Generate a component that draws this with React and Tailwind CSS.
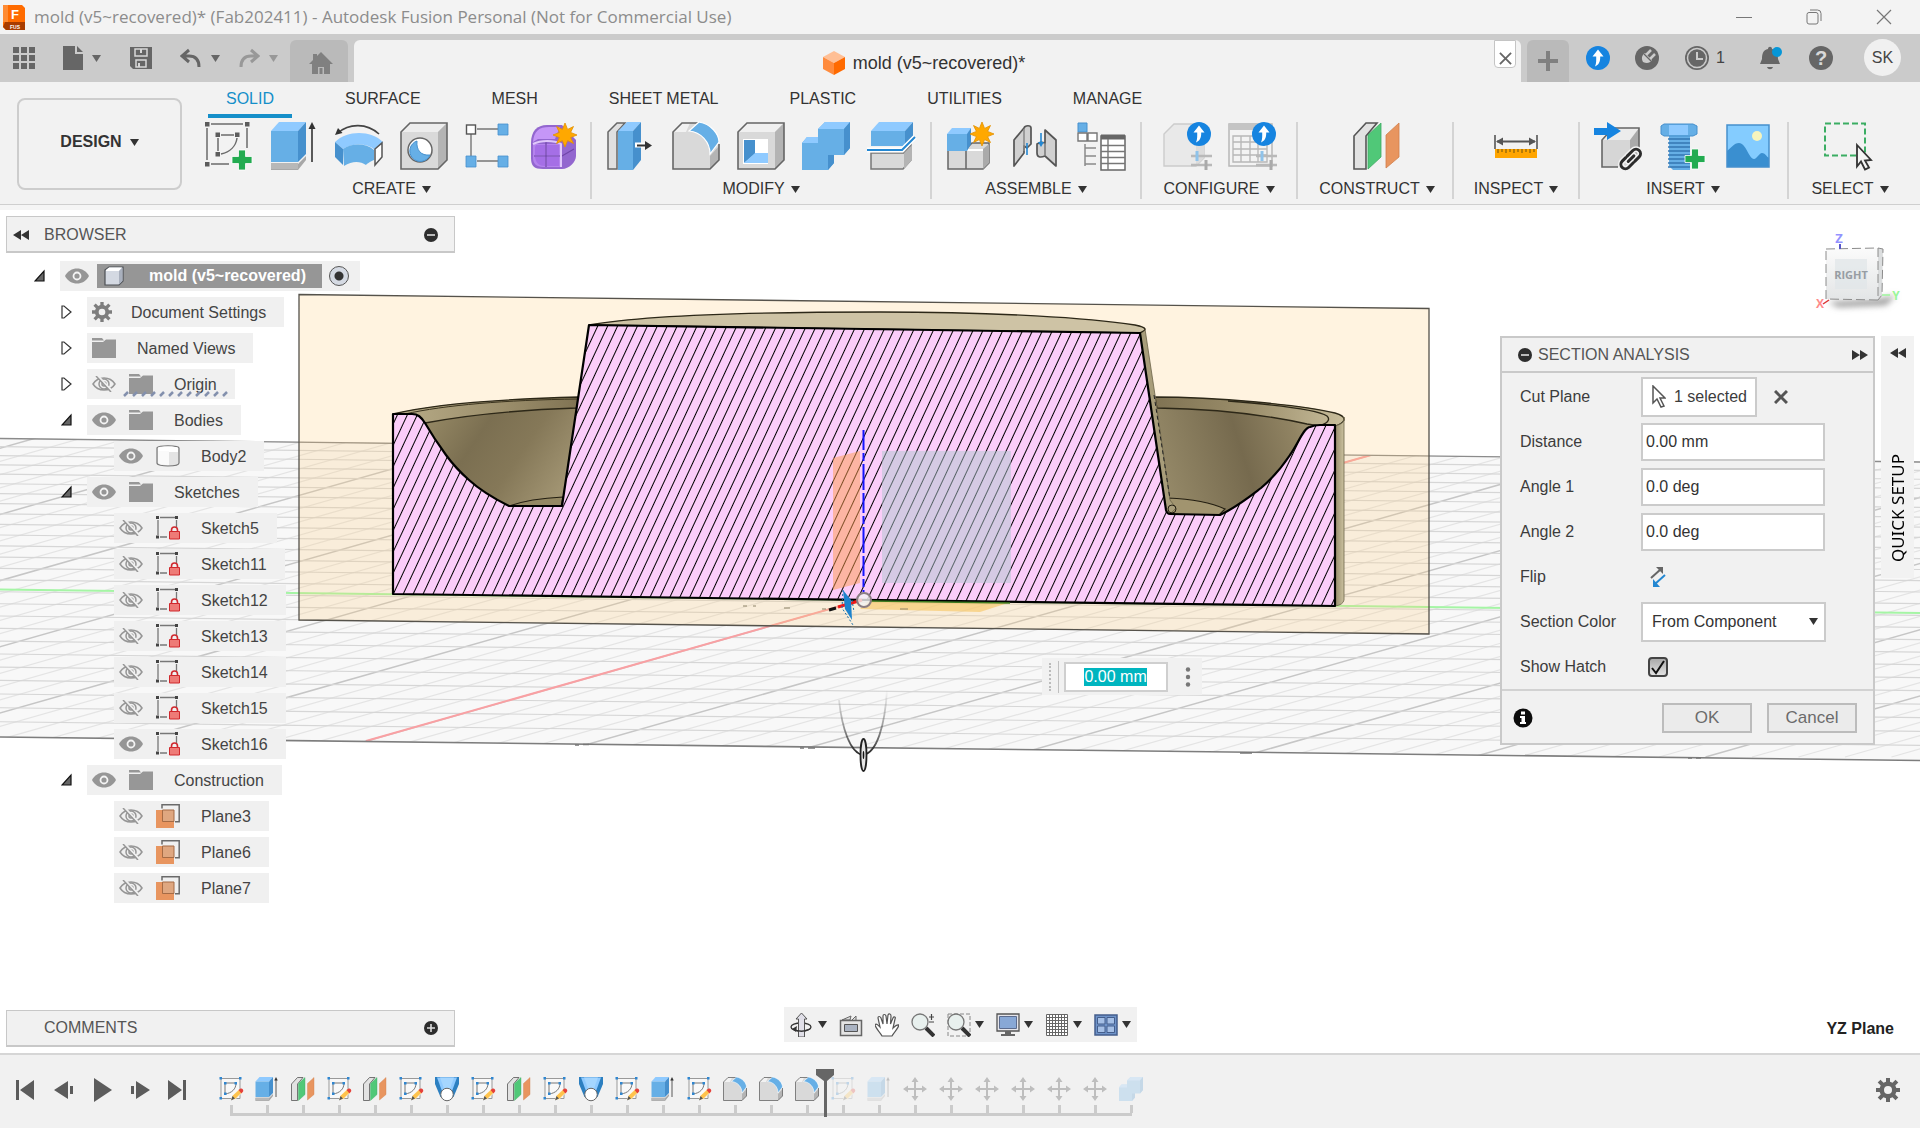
import { useEffect, useRef, useState } from "react";
import clsx from "clsx";

const ribbonTabs = [
  "SOLID",
  "SURFACE",
  "MESH",
  "SHEET METAL",
  "PLASTIC",
  "UTILITIES",
  "MANAGE",
];

const treeItems = [
  { label: "Document Settings", icon: "gear", level: 1, state: "closed" },
  { label: "Named Views", icon: "folder", level: 1, state: "closed" },
  { label: "Origin", icon: "folder", level: 1, state: "closed", eye: "off", dashed: true },
  { label: "Bodies", icon: "folder", level: 1, state: "open", eye: "on" },
  { label: "Body2", icon: "body", level: 2, eye: "on" },
  { label: "Sketches", icon: "folder", level: 1, state: "open", eye: "on" },
  { label: "Sketch5", icon: "sketch", level: 2, eye: "off" },
  { label: "Sketch11", icon: "sketch", level: 2, eye: "off" },
  { label: "Sketch12", icon: "sketch", level: 2, eye: "off" },
  { label: "Sketch13", icon: "sketch", level: 2, eye: "off" },
  { label: "Sketch14", icon: "sketch", level: 2, eye: "off" },
  { label: "Sketch15", icon: "sketch", level: 2, eye: "off" },
  { label: "Sketch16", icon: "sketch", level: 2, eye: "on" },
  { label: "Construction", icon: "folder", level: 1, state: "open", eye: "on" },
  { label: "Plane3", icon: "plane", level: 2, eye: "off" },
  { label: "Plane6", icon: "plane", level: 2, eye: "off" },
  { label: "Plane7", icon: "plane", level: 2, eye: "off" },
];

/* ---------- small shared glyphs ---------- */

function Caret({ className = "text-[#333]" }) {
  return (
    <svg viewBox="0 0 9 7" className={clsx("h-[7px] w-[9px] flex-none", className)} aria-hidden="true">
      <path d="M0 0h9L4.5 7z" fill="currentColor" />
    </svg>
  );
}

function Star({ x, y }) {
  return (
    <path
      transform={`translate(${x} ${y})`}
      d="M0-12 2.6-5.6 8.5-8.5 5.6-2.6 12 0 5.6 2.6 8.5 8.5 2.6 5.6 0 12-2.6 5.6-8.5 8.5-5.6 2.6-12 0-5.6-2.6-8.5-8.5-2.6-5.6z"
      fill="#ffa800"
      stroke="#e29000"
      strokeWidth="0.8"
    />
  );
}

function PlusMark({ x, y }) {
  return (
    <path
      transform={`translate(${x} ${y})`}
      d="M-3.5-10h7v6.5h6.5v7H3.5V10h-7V3.5H-10v-7h6.5z"
      fill="#22ab50"
      stroke="#fff"
      strokeWidth="0.8"
    />
  );
}

function UpBadge({ x, y }) {
  return (
    <g transform={`translate(${x} ${y})`}>
      <circle r="12" fill="#1684e0" />
      <path d="M0-8.5 5.5-1.5H2.2C2.4 4 .5 7-3 8.5-1.5 5-1.8 2-1.8-1.5h-3.7z" fill="#fff" />
    </g>
  );
}

/* ---------- toolbar drawings, all on a 48 x 48 box ---------- */

const drawings = {
  sketch: (
    <>
      <path d="M6 2h32M2 6v32M42 6v20M6 42h18" stroke="#6b6b6b" strokeWidth="1.5" fill="none" />
      <path d="M0 0h4.5v4.5H0zM40 0h4.5v4.5H40zM0 40h4.5v4.5H0zM10.5 10.5H15V15h-4.5zM30 10.5h4.5V15H30zM10.5 30H15v4.5h-4.5z" fill="#5c5c5c" />
      <path d="M16 13h13M13 16v13M32 16c-1 8-7 14-16 16" stroke="#6b6b6b" strokeWidth="1.5" fill="none" />
      <PlusMark x={37} y={38} />
    </>
  ),
  extrude: (
    <>
      <path d="M1 42h27l8-8v4l-8 10H1z" fill="#a8a8a8" />
      <path d="M1 41h27v6H1z" fill="#b8b8b8" />
      <path d="M1 9 9 0h27l-8 9z" fill="#8fcaff" />
      <path d="M1 9h27v31H1z" fill="#66afe6" />
      <path d="m28 9 8-9v32l-8 8z" fill="#4690cd" />
      <path d="M42 40V4" stroke="#333" strokeWidth="1.6" />
      <path d="m38.5 7 3.5-7 3.5 7z" fill="#333" />
    </>
  ),
  revolve: (
    <>
      <path d="M3 11C14 1 32 1 44 12" stroke="#444" strokeWidth="1.6" fill="none" />
      <path d="m0 13 3-7 4.5 5z" fill="#333" />
      <path d="M0 20C12 8 36 8 48 20l-8 8C32 21 18 21 8 27z" fill="#8fcaff" />
      <path d="M0 20 8 27v16L0 35z" fill="#4690cd" />
      <path d="M8 27c9-6 23-6 31 1v10c-5 2-7 4-8 5-6-4-14-4-22 1z" fill="#66afe6" />
      <path d="m40 27 7-6v14l-7 8z" fill="#fff" stroke="#555" strokeWidth="1.5" />
    </>
  ),
  hole: (
    <>
      <path d="M1 10 10 1h37v37l-9 9H1z" fill="#d9d9d9" />
      <path d="M1 10 10 1h37l-9 9z" fill="#ededed" />
      <path d="m38 10 9-9v37l-9 9z" fill="#b4b4b4" />
      <path d="M1 10 10 1h37v37l-9 9H1z" fill="none" stroke="#666" strokeWidth="1.6" />
      <circle cx="20" cy="28" r="12" fill="#fff" stroke="#666" strokeWidth="1.5" />
      <path d="M17 19c-1 9 4 15 13 14A10.500 10.500 0 1 1 17 19z" fill="#66afe6" stroke="#4690cd" />
    </>
  ),
  pattern: (
    <>
      <path d="M12 7h21M6 12v22M12 39h21" stroke="#777" strokeWidth="1.4" />
      <rect x="1.5" y="3" width="9" height="9" fill="#fff" stroke="#555" strokeWidth="1.4" />
      <path d="M33 2h10v11H33zM1 34h10v11H1zM33 34h10v11H33z" fill="#66afe6" stroke="#4690cd" strokeWidth="0.8" />
    </>
  ),
  form: (
    <>
      <path d="M1 21C1 9 7 3 17 3h15l14 15v16c0 6-7 13-14 13H13C4 47 1 44 1 36z" fill="#9367cf" />
      <path d="M3 20C4 9 9 5 19 5h11l-5 12H8z" fill="#c596f7" />
      <path d="M3 22h28v23H13C6 45 3 41 3 36z" fill="#b583ee" />
      <path d="M6 23h9v10H5v-8zM17 23h12v10H17zM5 35h10v9c-6 0-9-3-10-9zM17 35h12v9H17z" fill="#a56fe6" />
      <path d="M4 34h28l12-7M16 20v25" stroke="#6f45a8" strokeWidth="1.2" fill="none" />
      <path d="M3 22c8-4 21-4 28 0v23" stroke="#e0c8fb" strokeWidth="2" fill="none" />
      <Star x={35} y={13} />
    </>
  ),
  pressPull: (
    <>
      <path d="m1 10 9-9h8L10 10v37H1z" fill="#e0e0e0" stroke="#666" strokeWidth="1.5" />
      <path d="m11 9 9-9h14l-8 9z" fill="#8fcaff" />
      <path d="M11 9h15v39H11z" fill="#66afe6" />
      <path d="m26 9 8-9v38l-8 10z" fill="#4690cd" />
      <path d="M28 23h12" stroke="#fff" strokeWidth="5" />
      <path d="M30 23.5h11" stroke="#333" strokeWidth="2" />
      <path d="m38 19 7 4.5-7 4.5z" fill="#333" />
    </>
  ),
  fillet: (
    <>
      <path d="M1 10 10 1h14c12 1 22 11 23 23v14l-9 9H1z" fill="#d9d9d9" />
      <path d="m38 34 9-10v14l-9 9z" fill="#b4b4b4" />
      <path d="M1 10 10 1h8l-4 9z" fill="#f2f2f2" />
      <path d="M26 1H10l-9 9v37h37l9-9V22" fill="none" stroke="#666" strokeWidth="1.6" />
      <path d="m17 9 10-9c12 2 20 12 20 20l-9 12C38 20 29 10 17 9z" fill="#66afe6" stroke="#fff" strokeWidth="1.2" />
    </>
  ),
  shell: (
    <>
      <path d="M1 10 10 1h37v37l-9 9H1z" fill="#d9d9d9" />
      <path d="M1 10 10 1h37l-9 9z" fill="#f0f0f0" />
      <path d="m38 10 9-9v37l-9 9z" fill="#b4b4b4" />
      <path d="M1 10 10 1h37v37l-9 9H1z" fill="none" stroke="#666" strokeWidth="1.6" />
      <path d="M6 17h25v25H6z" fill="#fff" />
      <path d="M7 18h11v14L7 41z" fill="#4690cd" />
      <path d="M7 41 18 31h13v10z" fill="#8fcaff" />
    </>
  ),
  combine: (
    <>
      <path d="m0 21 5-6h11V7l7-7h25v26l-6 7H32v8l-6 7H0z" fill="#66afe6" />
      <path d="m16 7 7-7h25l-6 7zM0 21l5-6h11v6z" fill="#8fcaff" />
      <path d="m42 7 6-7v26l-6 7zM26 33h6v8l-6 7z" fill="#4690cd" />
    </>
  ),
  split: (
    <>
      <path d="M4 31h33l7-8v15l-8 9H4z" fill="#d9d9d9" stroke="#777" strokeWidth="1.5" />
      <path d="m37 31 8-8v15l-8 9z" fill="#b4b4b4" />
      <path d="m4 9 8-9h34l-8 9z" fill="#8fcaff" />
      <path d="M4 9h34v15H4z" fill="#66afe6" />
      <path d="m38 9 8-9v14l-8 10z" fill="#4690cd" />
      <path d="M0 28h35l13-13" stroke="#fff" strokeWidth="5" fill="none" />
      <path d="M0 28h35l13-13" stroke="#2387d2" strokeWidth="2" fill="none" />
    </>
  ),
  newComponent: (
    <>
      <path d="M1 27h18v20H1zM19 27l6-6h17v20l-6 6H19z" fill="#d9d9d9" stroke="#666" strokeWidth="1.5" />
      <path d="M36 27 42 22v19l-6 6z" fill="#aaa" />
      <path d="M19 28h17" stroke="#fff" strokeWidth="2" />
      <path d="m0 12 5-6h19l-3 6z" fill="#8fcaff" />
      <path d="M0 12h20v17H0z" fill="#66afe6" />
      <path d="m20 12 4-6v16l-4 7z" fill="#4690cd" />
      <Star x={35} y={12} />
    </>
  ),
  joint: (
    <>
      <path d="M2 18 12 6c1-3 7-3 7 0v16l-4 4-3-2v7L2 44z" fill="#d0d0d0" stroke="#555" strokeWidth="1.7" strokeLinejoin="round" />
      <path d="M12 7v22" stroke="#888" strokeWidth="1.5" />
      <path d="M44 44 33 34c-5 2-8 1-8-3V22l4-2 4 1V8l11 10z" fill="#d0d0d0" stroke="#555" strokeWidth="1.7" strokeLinejoin="round" />
      <path d="M33 21v13" stroke="#777" strokeWidth="1.5" />
      <path d="M15 21v12M29 11v11" stroke="#2387d2" strokeWidth="1.6" />
      <path d="m26 20 3 5 3-5z" fill="#2387d2" />
    </>
  ),
  bom: (
    <>
      <path d="M1 1h9v9H1z" fill="#66afe6" stroke="#4690cd" />
      <path d="M1 11h9v8H1zM11 11h9v8h-9z" fill="#fff" stroke="#777" strokeWidth="1.4" />
      <path d="M8 22v22M8 26h11M8 34h11M8 42h11" stroke="#8a8a8a" strokeWidth="1.5" />
      <path d="M24 14h24v34H24z" fill="#fff" stroke="#666" strokeWidth="1.5" />
      <path d="M24 12.5h24v5H24z" fill="#666" />
      <path d="M24 23.5h24M24 29.5h24M24 35.5h24M24 41.5h24M31 17v31" stroke="#777" strokeWidth="1.4" />
    </>
  ),
  configure: (
    <>
      <path d="M1 12 11 2h30v34l-8 8H1z" fill="#e9e9e9" stroke="#ccc" strokeWidth="1.4" />
      <path d="m33 11 8-9v34l-8 8z" fill="#dcdcdc" />
      <path d="M28 34h21M28 43h21" stroke="#b9b9b9" strokeWidth="2.5" />
      <path d="M34 29v10" stroke="#8fc3ea" strokeWidth="3" />
      <path d="M43 38v10" stroke="#aaa" strokeWidth="3" />
      <UpBadge x={36} y={12} />
    </>
  ),
  configureTable: (
    <>
      <path d="M1 2h43v42H1z" fill="#f3f3f3" stroke="#b8b8b8" strokeWidth="1.5" />
      <path d="M1 1h43v7H1z" fill="#c4c4c4" />
      <path d="M5 14h34v26H5zM5 20h34M5 27h34M5 33h34M13 14v26M22 14v26M30 14v26" fill="none" stroke="#b8b8b8" strokeWidth="1.4" />
      <path d="M28 34h21M28 43h21" stroke="#b9b9b9" strokeWidth="2.5" />
      <path d="M34 29v10" stroke="#8fc3ea" strokeWidth="3" />
      <path d="M43 38v10" stroke="#aaa" strokeWidth="3" />
      <UpBadge x={36} y={12} />
    </>
  ),
  plane: (
    <>
      <path d="m1 14 12-13h11L13 14v33H1z" fill="#e2e2e2" stroke="#555" strokeWidth="1.6" />
      <path d="M15 13 28 1v34L15 47z" fill="#50c878" stroke="#3daa62" strokeWidth="0.8" />
      <path d="M33 13 46 1v34L33 46z" fill="#e8955f" stroke="#d07f4b" strokeWidth="0.8" />
    </>
  ),
  measure: (
    <>
      <path d="M3 13v14M45 13v14" stroke="#555" strokeWidth="1.6" />
      <path d="M5 19.5h38" stroke="#555" strokeWidth="2" />
      <path d="m4 19.5 7-4v8zM44 19.5l-7-4v8z" fill="#555" />
      <path d="M3 27h42v9H3z" fill="#ffa500" />
      <path d="M6 27v4M10 27v3M14 27v4M18 27v3M22 27v4M26 27v3M30 27v4M34 27v3M38 27v4M42 27v3" stroke="#85600c" strokeWidth="1.2" />
    </>
  ),
  insertLink: (
    <>
      <path d="m8 18 11-12h26l-9 12z" fill="#ececec" />
      <path d="M8 18h28v27H8z" fill="#d6d6d6" />
      <path d="m36 18 9-12v28l-9 11z" fill="#aaa" />
      <path d="M24 45H8V18L19 6h26v20" fill="none" stroke="#666" strokeWidth="1.6" />
      <path d="M0 6h13V0l14 9-14 9v-5H0z" fill="#1684e0" />
      <g fill="none" strokeLinecap="round" transform="rotate(-45 36 37)">
        <path d="M34 33h-5a4 4 0 0 0 0 9h7M38 42h6a4 4 0 0 0 0-9h-8M33 37.5h8" stroke="#f2f2f2" strokeWidth="6" />
        <path d="M34 33h-5a4 4 0 0 0 0 9h7M38 42h6a4 4 0 0 0 0-9h-8M33 37.5h8" stroke="#2b2b2b" strokeWidth="3" />
      </g>
    </>
  ),
  bolt: (
    <>
      <path d="M10 13h21v35H14l-4-4z" fill="#66afe6" />
      <path d="M9 17h22M9 21h22M9 25h22M9 29h22M9 33h22M9 37h22M9 41h22M9 45h22" stroke="#3577b2" strokeWidth="1.5" />
      <path d="M2 4 5 2h29l4 2v8l-4 2H5l-3-2z" fill="#66afe6" stroke="#4690cd" />
      <path d="M10 3h19v10H10z" fill="#8fcaff" />
      <PlusMark x={36} y={37} />
    </>
  ),
  picture: (
    <>
      <path d="M3 3h42v42H3z" fill="#84ccff" />
      <circle cx="33" cy="14" r="5" fill="#f6f4bd" />
      <path d="M3 29c4-3 7-8 12-8 7 0 10 16 15 16 3 0 5-6 8-6s4 3 7 5v9H3z" fill="#3a8fd0" />
      <path d="M3 3h42v42H3z" fill="none" stroke="#4690cd" strokeWidth="1.5" />
    </>
  ),
  select: (
    <>
      <path d="M-1 1.5h40v32H-1z" fill="none" stroke="#3bad63" strokeWidth="2" strokeDasharray="6 3" />
      <path d="m31 23 14 15-6 .5 4 7-4 2-4-8-4 5z" fill="#f5f5f5" stroke="#333" strokeWidth="1.8" />
    </>
  ),
  timelineSketch: (
    <>
      <path d="M4 3h38v40H4z" fill="#f8f8f8" stroke="#999" strokeWidth="2" />
      <path d="M12 12h22M12 12v22M34 12c0 12-8 20-22 22" stroke="#777" strokeWidth="2" fill="none" />
      <path d="M1 0h5v5H1zM40 0h5v5h-5zM1 40h5v5H1zM10 10h5v5h-5zM31 10h5v5h-5zM10 31h5v5h-5z" fill="#2f86d0" />
      <path d="m24 46 3-9 14-13 6 6-14 14z" fill="#ffc34d" stroke="#fff" strokeWidth="1" />
      <path d="m24 47 3-9 5 5z" fill="#555" />
      <path d="m39 26 4-3c3-1 7 3 5 6l-3 4z" fill="#e5413b" />
    </>
  ),
  loft: (
    <>
      <path d="M0 0h48v14L37 40H11L0 14z" fill="#2c7fc0" />
      <path d="M4 1h40L34 28H14z" fill="#8fcaff" />
      <path d="M10 1h28l-8 22H18z" fill="#a5d6ff" />
      <circle cx="24" cy="35" r="12.500" fill="#fff" stroke="#666" strokeWidth="2" />
    </>
  ),
  move: (
    <>
      <path d="M24 6v36M6 24h36" stroke="#8c8c8c" strokeWidth="4" />
      <path d="m24 0 7 10H17zM24 48l-7-10h14zM0 24l10-7v14zM48 24l-10 7V17z" fill="#8c8c8c" />
    </>
  ),
};

function Drawing({ name, className = "h-12 w-12" }) {
  return (
    <svg viewBox="0 0 48 48" className={clsx("flex-none overflow-visible", className)} aria-hidden="true">
      {drawings[name]}
    </svg>
  );
}

/* ---------- title bar and document tabs ---------- */

function TitleBar() {
  return (
    <header className="flex h-[34px] items-center bg-[#f3f3f3] pl-[3px] pr-7">
      <svg viewBox="0 0 22 25" className="h-[25px] w-[22px]" aria-hidden="true">
        <path d="M3 0h16l3 3v22H3l-3-3V0z" fill="#ff6b00" />
        <path d="M0 0h5v17H0z" fill="#ff8b33" />
        <path d="M2 17h20v8H3l-3-3z" fill="#a83c00" />
        <text x="12" y="14" fontSize="13" fontWeight="700" fill="#fff" textAnchor="middle" fontFamily="Liberation Sans, sans-serif">F</text>
        <text x="12" y="23.5" fontSize="5" fontWeight="700" fill="#fff" textAnchor="middle" fontFamily="Liberation Sans, sans-serif">FUS</text>
      </svg>
      <h1 className="ml-[9px] flex-1 truncate font-['Open_Sans',sans-serif] text-[17px] leading-6 text-[#8c8c8c]">
        mold (v5~recovered)* (Fab202411) - Autodesk Fusion Personal (Not for Commercial Use)
      </h1>
      <div className="flex gap-[54px] text-[#777]">
        <button type="button" aria-label="Minimize">
          <svg viewBox="0 0 16 16" className="h-4 w-4" fill="none" stroke="currentColor"><path d="M0 8.5h16" /></svg>
        </button>
        <button type="button" aria-label="Restore">
          <svg viewBox="0 0 16 16" className="h-4 w-4" fill="none" stroke="currentColor">
            <rect x="1" y="3.5" width="11" height="11.5" rx="2" />
            <path d="M4 1h7.500a3.500 3.500 0 0 1 3.500 3.500V12" />
          </svg>
        </button>
        <button type="button" aria-label="Close window">
          <svg viewBox="0 0 16 16" className="h-4 w-4" fill="none" stroke="currentColor" strokeWidth="1.2"><path d="m1 1 14 14M15 1 1 15" /></svg>
        </button>
      </div>
    </header>
  );
}

function DocumentBar() {
  return (
    <div className="flex h-12 bg-[#cbcbcb] pt-[6px] text-[#666]">
      <div className="flex w-[290px] flex-none items-center pb-[6px] pl-[13px]">
        <button type="button" aria-label="Show data panel">
          <svg viewBox="0 0 22 22" className="h-[22px] w-[22px]" fill="currentColor">
            <path d="M0 0h6v6H0zM8 0h6v6H8zM16 0h6v6h-6zM0 8h6v6H0zM8 8h6v6H8zM16 8h6v6h-6zM0 16h6v6H0zM8 16h6v6H8zM16 16h6v6h-6z" />
          </svg>
        </button>
        <button type="button" aria-label="File" className="ml-7 flex items-center gap-[9px]">
          <svg viewBox="0 0 20 24" className="h-6 w-5" fill="currentColor"><path d="M0 0h12v8h8v16H0zM14 0l6 6h-6z" /></svg>
          <Caret className="text-[#666]" />
        </button>
        <button type="button" aria-label="Save" className="ml-[29px]">
          <svg viewBox="0 0 22 22" className="h-[22px] w-[22px]">
            <path d="M0 0h22v22H3l-3-3z" fill="#666" />
            <path d="M5 2h12v7H5zM6 13h10v7H6z" fill="none" stroke="#d8d8d8" strokeWidth="1.5" />
            <path d="M11 2v4M9 16v4" stroke="#d8d8d8" strokeWidth="2" />
          </svg>
        </button>
        <button type="button" aria-label="Undo" className="ml-7 flex items-center gap-[9px]">
          <svg viewBox="0 0 22 20" className="h-5 w-[22px]" fill="none" stroke="currentColor" strokeWidth="3">
            <path d="m9 2-7 6 7 6M2 8h7c7 0 10 4 10 11" />
          </svg>
          <Caret className="text-[#666]" />
        </button>
        <button type="button" aria-label="Redo" className="ml-[18px] flex items-center gap-[9px] text-[#989898]">
          <svg viewBox="0 0 22 20" className="h-5 w-[22px]" fill="none" stroke="currentColor" strokeWidth="3">
            <path d="m13 2 7 6-7 6M20 8h-7C6 8 3 12 3 19" />
          </svg>
          <Caret className="text-[#989898]" />
        </button>
      </div>
      <button type="button" aria-label="Home" className="flex w-[58px] flex-none items-center justify-center rounded-t-md bg-[#bababa] pl-1 pt-1">
        <svg viewBox="0 0 24 22" className="h-[22px] w-6" fill="#808080">
          <path d="M12 0 24 12h-3v10h-6v-7H9v7H3V12H0L4 8V2h4v2z" />
          <path d="M10.5 16h3v6h-3z" />
        </svg>
      </button>
      <div className="ml-[6px] flex flex-1 rounded-t-md bg-[#f2f2f2]">
        <div className="flex flex-1 items-center justify-center gap-2 pt-1 text-[18px] text-[#333]">
          <svg viewBox="0 0 22 24" className="h-6 w-[22px]" aria-hidden="true">
            <path d="m0 6 11-6 11 6-11 6z" fill="#ffbf95" />
            <path d="M0 6l11 6v12L0 18z" fill="#ff8b3d" />
            <path d="m22 6-11 6v12l11-6z" fill="#ff6a00" />
          </svg>
          mold (v5~recovered)*
        </div>
        <button type="button" aria-label="Close document" className="mr-[5px] flex h-7 w-[22px] items-end justify-center rounded-b-sm border border-[#c4c4c4] bg-white pb-[2px]">
          <svg viewBox="0 0 14 14" className="h-[13px] w-[13px]" fill="none" stroke="#666" strokeWidth="2"><path d="m1 1 12 12M13 1 1 13" /></svg>
        </button>
      </div>
      <button type="button" aria-label="New design" className="ml-[6px] flex w-[42px] flex-none items-center justify-center rounded-t-md bg-[#bababa]">
        <svg viewBox="0 0 20 20" className="h-5 w-5" fill="#808080"><path d="M8 0h4v8h8v4h-8v8H8v-8H0V8h8z" /></svg>
      </button>
      <div className="flex flex-none items-center pb-[7px] pl-[17px] pr-[19px]">
        <button type="button" aria-label="Extensions">
          <svg viewBox="0 0 24 24" className="h-6 w-6"><UpBadge x={12} y={12} /></svg>
        </button>
        <button type="button" aria-label="Job status" className="ml-[25px]">
          <svg viewBox="0 0 24 24" className="h-6 w-6">
            <circle cx="12" cy="12" r="12" fill="#666" />
            <path d="m4 20 4-4c-2-4-1-7 2-9l7 7c-2 3-5 4-9 2" fill="#cbcbcb" />
            <path d="m11 9 5-5M15 13l5-5" stroke="#cbcbcb" strokeWidth="2.5" />
            <path d="M9 8 16 15" stroke="#666" strokeWidth="1.2" />
          </svg>
        </button>
        <button type="button" className="ml-[26px] flex items-center gap-[7px] text-[16px] text-[#444]">
          <svg viewBox="0 0 24 24" className="h-6 w-6" aria-hidden="true">
            <circle cx="12" cy="12" r="12" fill="#666" />
            <circle cx="12" cy="12" r="9.500" fill="none" stroke="#cbcbcb" strokeWidth="1.500" />
            <path d="M12 6v7h6" fill="none" stroke="#cbcbcb" strokeWidth="2" />
          </svg>
          1
        </button>
        <button type="button" aria-label="Notifications" className="ml-[34px]">
          <svg viewBox="0 0 24 24" className="h-6 w-6">
            <path d="M9 3c0-3 4-3 4 0 5 1 6 5 6 10l2 5H1l2-5C3 8 4 4 9 3zM8 21h6c-1 3-5 3-6 0z" fill="#666" />
            <circle cx="18" cy="6" r="5" fill="#0696d7" />
          </svg>
        </button>
        <button type="button" aria-label="Help" className="ml-[26px] flex h-6 w-6 items-center justify-center rounded-full bg-[#666] text-[20px] font-bold leading-6 text-[#d8d8d8]">
          ?
        </button>
        <button type="button" aria-label="Account" className="ml-[31px] h-[37px] w-[37px] rounded-full bg-[#f0f0f0] text-[16px] text-[#444]">
          SK
        </button>
      </div>
    </div>
  );
}

/* ---------- ribbon ---------- */

function RibbonGroup({ label, icons, className = "px-[15px]" }) {
  return (
    <section className={clsx("flex h-[77px] flex-none flex-col items-center justify-between border-r-2 border-[#d4d4d4] last:border-r-0", className)}>
      <div className="flex gap-[17px]">
        {icons.map((icon) => (
          <button type="button" key={icon} aria-label={icon}>
            <Drawing name={icon} />
          </button>
        ))}
      </div>
      <button type="button" className="flex items-center gap-[6px] whitespace-nowrap text-[16px] leading-5 text-[#333]">
        {label}
        <Caret />
      </button>
    </section>
  );
}

function Ribbon() {
  return (
    <div className="border-b-[5px] border-[#f5f5f5] bg-[#f2f2f2]">
      <div className="flex border-b border-[#cfcfcf]">
        <div className="w-[185px] flex-none pl-[17px] pt-4">
          <button type="button" className="flex h-[92px] w-[165px] items-center justify-center gap-2 rounded-lg border-2 border-[#cdcdcd] pb-1 text-[16px] font-bold text-[#333]">
            DESIGN
            <Caret />
          </button>
        </div>
        <div className="min-w-0 flex-1">
          <nav className="flex h-9 gap-[35px] pl-[23px] text-[16px] text-[#333]">
            {ribbonTabs.map((tab) => (
              <button
                type="button"
                key={tab}
                className={clsx(
                  "border-b-[4px] px-[18px] pt-[2px] whitespace-nowrap",
                  tab === "SOLID" ? "border-[#158fc9] text-[#158fc9]" : "border-transparent"
                )}
              >
                {tab}
              </button>
            ))}
          </nav>
          <div className="flex pb-[5px] pt-1">
            <RibbonGroup label="CREATE" icons={["sketch", "extrude", "revolve", "hole", "pattern", "form"]} className="pl-5 pr-[12px]" />
            <RibbonGroup label="MODIFY" icons={["pressPull", "fillet", "shell", "combine", "split"]} />
            <RibbonGroup label="ASSEMBLE" icons={["newComponent", "joint", "bom"]} />
            <RibbonGroup label="CONFIGURE" icons={["configure", "configureTable"]} className="min-w-[156px]" />
            <RibbonGroup label="CONSTRUCT" icons={["plane"]} className="min-w-[156px] pl-1" />
            <RibbonGroup label="INSPECT" icons={["measure"]} className="min-w-[126px]" />
            <RibbonGroup label="INSERT" icons={["insertLink", "bolt", "picture"]} className="pl-[14px] pr-[15px]" />
            <RibbonGroup label="SELECT" icons={["select"]} className="min-w-[122px]" />
          </div>
        </div>
      </div>
    </div>
  );
}

/* ---------- browser tree ---------- */

function DoubleArrow({ flip }) {
  return (
    <svg viewBox="0 0 16 10" className={clsx("h-[10px] w-4", flip && "rotate-180")} fill="#333" aria-hidden="true">
      <path d="M8 0v10L0 5zM16 0v10L8 5z" />
    </svg>
  );
}

function RoundSign({ plus }) {
  return (
    <svg viewBox="0 0 14 14" className="h-[14px] w-[14px]" aria-hidden="true">
      <circle cx="7" cy="7" r="7" fill="#2d2d2d" />
      <path d={plus ? "M3 7h8M7 3v8" : "M3 7h8"} stroke="#ddd" strokeWidth="1.6" />
    </svg>
  );
}

function Eye({ off }) {
  return (
    <svg viewBox="0 0 24 16" className="h-4 w-6 flex-none" aria-hidden="true">
      {off ? (
        <g fill="none" stroke="#969696" strokeWidth="1.5">
          <path d="M1 8c5-8 17-8 22 0-5 8-17 8-22 0z" />
          <circle cx="12" cy="8" r="5" />
          <circle cx="12" cy="8" r="2" />
          <path d="m6 0 15 16" stroke="#f0f0f0" strokeWidth="2" />
          <path d="m4 0 15 16" />
        </g>
      ) : (
        <>
          <path d="M0 8c5-10 19-10 24 0-5 10-19 10-24 0z" fill="#969696" />
          <circle cx="12" cy="8" r="3.5" fill="#969696" stroke="#f4f4f4" strokeWidth="1.8" />
        </>
      )}
    </svg>
  );
}

function Twisty({ open }) {
  return (
    <svg viewBox="0 0 11 14" className="h-[14px] w-[11px]" aria-hidden="true">
      {open ? (
        <path d="M10 2v10H1z" fill="#666" stroke="#111" strokeWidth="1.2" />
      ) : (
        <path d="M1 1h2l7 6-7 6H1z" fill="#fff" stroke="#333" strokeWidth="1.2" />
      )}
    </svg>
  );
}

const gearPath =
  "M10 0h4v3.700l2.500 1 3-3 2.800 2.800-3 3 1 2.500H24v4h-3.700l-1 2.500 3 3-2.800 2.800-3-3-2.500 1V24h-4v-3.700l-2.500-1-3 3-2.800-2.800 3-3-1-2.500H0v-4h3.700l1-2.500-3-3 2.800-2.800 3 3 2.500-1zM12 8a4 4 0 1 0 0 8 4 4 0 0 0 0-8z";

function TreeIcon({ name }) {
  return (
    <svg viewBox="0 0 24 24" className={clsx("flex-none", name === "gear" ? "h-5 w-5" : "h-6 w-6")} aria-hidden="true">
      {name === "gear" && <path d={gearPath} fill="#7d7d7d" fillRule="evenodd" />}
      {name === "folder" && <path d="M0 2h10l2 2.5H0zM0 6h11l3-2.500h10V22H0z" fill="#979797" />}
      {name === "body" && (
        <>
          <path d="M1 4c0-3 22-3 22 0v15c0 4-22 4-22 0z" fill="#e4e4e4" stroke="#777" strokeWidth="1.2" />
          <path d="M2 4c0-2 20-2 20 0v4H2z" fill="#fff" />
          <path d="M2 7h11v14C8 21 2 21 2 18z" fill="#fafafa" />
        </>
      )}
      {name === "sketch" && (
        <>
          <path d="M4 1.5h15M2 4v15M20.5 4v8M4 21h7" stroke="#777" strokeWidth="1.3" />
          <path d="M0 0h3v3H0zM19 0h3v3h-3zM0 19.5h3v3H0z" fill="#444" />
          <path d="M15.500 16v-2c0-4 6-4 6 0v2" fill="none" stroke="#d0282d" strokeWidth="1.6" />
          <path d="M13.500 15.500h10V23h-10z" fill="#ee7b77" stroke="#d0282d" />
        </>
      )}
      {name === "plane" && (
        <>
          <path d="M0 6h18v18H0z" fill="#e8955f" />
          <path d="M6 4.500V.8h17.200v17H19" fill="none" stroke="#6a6a6a" strokeWidth="1.5" />
          <path d="M6.500 6v11.500H18V6z" fill="#dfa780" stroke="#a56b45" />
        </>
      )}
    </svg>
  );
}

function TreeRow({ item }) {
  return (
    <li className={clsx("flex h-[30px] items-center", item.level === 1 ? "pl-[55px]" : "pl-[108px]")}>
      {item.state && (
        <button type="button" aria-label={`Toggle ${item.label}`} className="mr-[15px]">
          <Twisty open={item.state === "open"} />
        </button>
      )}
      <div className="relative flex h-[30px] items-center bg-[#f0f0f0] pl-[5px] pr-[18px]">
        {item.eye && (
          <button type="button" aria-label={`Visibility of ${item.label}`} className="mr-[13px]">
            <Eye off={item.eye === "off"} />
          </button>
        )}
        <TreeIcon name={item.icon} />
        <span className={clsx("whitespace-nowrap pt-px text-[16px] text-[#444]", item.icon === "gear" ? "ml-[19px]" : "ml-[21px]")}>
          {item.label}
        </span>
        {item.dashed && (
          <svg viewBox="0 0 106 6" className="absolute bottom-[2px] left-9 h-[6px] w-[106px]" aria-hidden="true">
            {Array.from({ length: 12 }, (_, i) => (
              <path key={i} d={`M${i * 9 + 1} 5l4-4`} stroke="#8390ad" strokeWidth="2.5" />
            ))}
          </svg>
        )}
      </div>
    </li>
  );
}

function BrowserPanel() {
  return (
    <aside className="w-[449px]">
      <div className="flex h-[37px] items-center border border-b-2 border-[#c8c8c8] bg-[#f1f1f1] pl-[6px] pr-4 pt-px">
        <button type="button" aria-label="Collapse browser"><DoubleArrow /></button>
        <h2 className="ml-[15px] flex-1 text-[16px] text-[#555]">BROWSER</h2>
        <button type="button" aria-label="Minimize browser"><RoundSign /></button>
      </div>
      <ul className="mt-2 flex flex-col gap-[6px]">
        <li className="flex h-[30px] items-center pl-7">
          <button type="button" aria-label="Toggle mold" className="mr-[15px]"><Twisty open /></button>
          <div className="flex h-[30px] items-center bg-[#f0f0f0] pl-[5px] pr-[11px]">
            <button type="button" aria-label="Visibility of mold"><Eye /></button>
            <div className="ml-2 flex h-6 items-center bg-[#969696] pl-[7px] pr-4">
              <svg viewBox="0 0 20 20" className="h-5 w-5" aria-hidden="true">
                <path d="m1 4 4-3h14v14l-4 4H1z" fill="#d4d9e2" stroke="#4d5055" strokeWidth="1.2" />
                <path d="m2 4 3-2.500h13L15 5H2z" fill="#fff" />
                <path d="m15 5 3.500-3.500V15L15 18.500z" fill="#a9b0bd" />
              </svg>
              <span className="ml-[25px] whitespace-nowrap text-[16px] font-bold text-white">mold (v5~recovered)</span>
            </div>
            <input
              type="radio"
              defaultChecked
              aria-label="Activate component"
              className="ml-[7px] h-5 w-5 appearance-none rounded-full border border-[#555] bg-[radial-gradient(circle,#333_4px,#d5dae3_5px)]"
            />
          </div>
        </li>
        {treeItems.map((item) => (
          <TreeRow key={item.label} item={item} />
        ))}
      </ul>
    </aside>
  );
}

/* ---------- section analysis dialog ---------- */

function FormRow({ id, label, children }) {
  return (
    <div className="flex h-[45px] items-center">
      <label htmlFor={id} className="w-[121px] flex-none">{label}</label>
      {children}
    </div>
  );
}

function SectionAnalysis() {
  const [hatch, setHatch] = useState(true);
  const field = "h-[38px] w-[184px] border-2 border-[#cbcbcb] bg-white px-[3px] text-[16px] text-[#333] outline-none";

  return (
    <form
      className="w-[375px] border-2 border-[#c9c9c9] bg-[#f1f1f1] text-[16px] text-[#3c3c3c]"
      onSubmit={(event) => event.preventDefault()}
    >
      <div className="flex h-[35px] items-center border-b-2 border-[#c9c9c9] pl-4 pr-[5px]">
        <RoundSign />
        <h2 className="ml-[6px] flex-1 text-[#555]">SECTION ANALYSIS</h2>
        <button type="button" aria-label="Expand dialog"><DoubleArrow flip /></button>
      </div>
      <div className="pl-[18px] pt-px">
        <FormRow id="cut-plane" label="Cut Plane">
          <button type="button" id="cut-plane" className="flex h-10 w-[116px] items-center gap-2 whitespace-nowrap border-2 border-[#cbcbcb] bg-white pl-[9px]">
            <svg viewBox="0 0 14 24" className="h-6 w-[14px] flex-none" fill="#fff" stroke="#555" strokeWidth="1.5" aria-hidden="true">
              <path d="M1 1v17l4-4 4 8 3-1-4-8h5z" />
            </svg>
            1 selected
          </button>
          <button type="button" aria-label="Clear selection" className="ml-[17px]">
            <svg viewBox="0 0 14 14" className="h-[14px] w-[14px]" stroke="#555" strokeWidth="3"><path d="m1 1 12 12M13 1 1 13" /></svg>
          </button>
        </FormRow>
        <FormRow id="distance" label="Distance">
          <input id="distance" className={field} defaultValue="0.00 mm" />
        </FormRow>
        <FormRow id="angle-1" label="Angle 1">
          <input id="angle-1" className={field} defaultValue="0.0 deg" />
        </FormRow>
        <FormRow id="angle-2" label="Angle 2">
          <input id="angle-2" className={field} defaultValue="0.0 deg" />
        </FormRow>
        <FormRow id="flip" label="Flip">
          <button type="button" id="flip" className="ml-2">
            <svg viewBox="0 0 18 20" className="h-5 w-[18px]" fill="none" strokeWidth="2" aria-hidden="true">
              <path d="M2 11 12 2" stroke="#666" />
              <path d="M7 0h7v7z" fill="#666" />
              <path d="M16 8 6 17" stroke="#2387d2" />
              <path d="M4 12v8h7z" fill="#2387d2" />
            </svg>
          </button>
        </FormRow>
        <FormRow id="section-color" label="Section Color">
          <div className="relative">
            <select id="section-color" className="h-10 w-[185px] appearance-none border-2 border-[#cbcbcb] bg-white px-[9px] text-[16px] text-[#333]">
              <option>From Component</option>
            </select>
            <span className="pointer-events-none absolute right-2 top-4"><Caret /></span>
          </div>
        </FormRow>
        <FormRow id="show-hatch" label="Show Hatch">
          <span className="relative ml-[7px] flex">
            <input
              id="show-hatch"
              type="checkbox"
              checked={hatch}
              onChange={(event) => setHatch(event.target.checked)}
              className="h-5 w-5 appearance-none rounded border-2 border-[#444] bg-linear-to-b from-[#ababab] to-[#e2e2e2]"
            />
            {hatch && (
              <svg viewBox="0 0 20 20" className="pointer-events-none absolute inset-0 h-5 w-5" fill="none" stroke="#111" strokeWidth="2">
                <path d="m4 11 4 5 8-12" />
              </svg>
            )}
          </span>
        </FormRow>
      </div>
      <div className="flex h-[54px] items-center border-t-2 border-[#d2d2d2] pl-[11px] pr-4 pt-[2px]">
        <button type="button" aria-label="Info">
          <svg viewBox="0 0 20 20" className="h-5 w-5">
            <circle cx="10" cy="10" r="9.500" fill="#0c0c0c" />
            <path d="M8 3.500h4v3H8zM7 8h5v6h1v2H7v-2h1.500v-4H7z" fill="#fff" />
          </svg>
        </button>
        <div className="ml-auto flex gap-[15px] text-[17px] text-[#6b6b6b]">
          <button type="submit" className="h-[30px] w-[90px] border-2 border-[#bcbcbc] bg-[#ebebeb]">OK</button>
          <button type="button" className="h-[30px] w-[90px] border-2 border-[#bcbcbc] bg-[#ebebeb]">Cancel</button>
        </div>
      </div>
    </form>
  );
}

function ViewCube() {
  return (
    <svg viewBox="0 0 96 96" className="h-24 w-24" fontFamily="Open Sans, sans-serif" aria-label="View cube">
      <defs>
        <linearGradient id="cube-face" x1="0" y1="0" x2="0" y2="1">
          <stop offset="0" stopColor="#fbfbfb" />
          <stop offset="1" stopColor="#e3e5e6" />
        </linearGradient>
        <filter id="cube-shadow" x="-20%" y="-100%" width="140%" height="300%">
          <feGaussianBlur stdDeviation="3" />
        </filter>
      </defs>
      <path d="M16 74 68 71l16-4-10 10-48 2z" fill="#999" filter="url(#cube-shadow)" />
      <path d="m66 20 5 1-1 46-4 5z" fill="#dcdedf" />
      <path d="M14 21 66 20v52l-52-1z" fill="url(#cube-face)" />
      <path d="M23 31h32v30H23z" fill="#dfe5e8" opacity="0.7" />
      <path d="M14 21 66 20v52l-52-1zM66 20l5 1-1 46-4 5" fill="none" stroke="#8c8c8c" strokeDasharray="9 4" />
      <text x="39" y="51" fontSize="11" fontWeight="700" fill="#979da3" textAnchor="middle">RIGHT</text>
      <path d="M28 16v5" stroke="#5757c9" strokeWidth="2" />
      <text x="27" y="15" fontSize="13" fontWeight="700" fill="#9393ff" textAnchor="middle">Z</text>
      <path d="m11 76 6-4" stroke="#d33" strokeWidth="1.500" />
      <text x="8" y="80" fontSize="12" fontWeight="700" fill="#ff8a8a" textAnchor="middle">X</text>
      <path d="M70 67h8" stroke="#9cf59c" strokeWidth="1.500" />
      <text x="84" y="72" fontSize="12" fontWeight="700" fill="#9af79a" textAnchor="middle">Y</text>
    </svg>
  );
}

/* ---------- model view ---------- */

// Rows of the ground grid, measured on the left edge of the view.
const gridRows = Array.from({ length: 26 }, (_, i) => 438 + i * 8.6 + i * i * 0.11);
const gridDiagonals = Array.from({ length: 70 }, (_, i) => i * 46.5 - 1247);

const sectionOutline =
  "M393 594V414h19c6 0 9 3 13 9 7 12 13 21 21 32s15 18 23 25c12 11 26 19 40 26h53L589 325l551 8 26 177q1 4 4 4l50 1c17-8 28-17 41-27 12-10 21-21 29-33 8-11 14-28 20-28 4-2 7-2 10-2h15v181z";

function Scene() {
  return (
    <svg viewBox="0 210 1920 843" preserveAspectRatio="xMidYMid slice" className="absolute inset-0 h-full w-full" role="img" aria-label="Section view of mold">
      <defs>
        <pattern id="hatch" width="9" height="9" patternUnits="userSpaceOnUse" patternTransform="rotate(25)">
          <path d="M4.500 0v9" stroke="#000" />
        </pattern>
        <linearGradient id="bowl-left" x1="0" x2="1" y1="0.2" y2="0.6">
          <stop offset="0" stopColor="#a3966f" />
          <stop offset="0.45" stopColor="#7b6f51" />
          <stop offset="0.7" stopColor="#857858" />
          <stop offset="1" stopColor="#a19472" />
        </linearGradient>
        <linearGradient id="bowl-right" x1="0" x2="1" y1="0.5" y2="0.3">
          <stop offset="0" stopColor="#958968" />
          <stop offset="0.45" stopColor="#766a4e" />
          <stop offset="0.75" stopColor="#918463" />
          <stop offset="1" stopColor="#b5a984" />
        </linearGradient>
        <linearGradient id="rim-left" x1="0" x2="1">
          <stop offset="0" stopColor="#b8ac88" />
          <stop offset="0.6" stopColor="#9b8e6b" />
          <stop offset="1" stopColor="#807353" />
        </linearGradient>
        <linearGradient id="rim-right" x1="0" x2="1">
          <stop offset="0" stopColor="#807353" />
          <stop offset="0.5" stopColor="#9b8e6b" />
          <stop offset="1" stopColor="#c8bd9b" />
        </linearGradient>
        <linearGradient id="wall" x1="0" x2="1">
          <stop offset="0" stopColor="#968b69" />
          <stop offset="1" stopColor="#cdc3a2" />
        </linearGradient>
        <linearGradient id="arc-fade" x1="0" x2="0" y1="0" y2="1">
          <stop offset="0" stopColor="#555" stopOpacity="0" />
          <stop offset="0.5" stopColor="#555" stopOpacity="0.5" />
          <stop offset="1" stopColor="#222" />
        </linearGradient>
        <clipPath id="ground"><path d="M0 438 1920 462V760L0 737z" /></clipPath>
      </defs>

      <g clipPath="url(#ground)">
        <path d="M0 438 1920 462V760L0 737z" fill="#f8f8f8" />
        {gridDiagonals.map((x, i) => (
          <path
            key={x}
            d={`M${x - 70} 757 L${x + 1061} 435`}
            stroke={i % 5 === 0 ? "#c6c6c6" : "#e4e4e4"}
            strokeWidth={i % 5 === 0 ? 1.5 : 1.2}
          />
        ))}
        {gridRows.map((y) => (
          <path key={y} d={`M0 ${y} L1920 ${y + 23.6}`} stroke="#d6d6d6" strokeWidth="1.2" />
        ))}
        <path d="M0 589.5 1920 613" stroke="#a5f5a5" strokeWidth="2" />
        <path d="M366 741 1371 455" stroke="#f9a0a3" strokeWidth="2" />
      </g>
      <path d="m0 438.500 1920 23.500" stroke="#8b8b8b" strokeWidth="1.3" />
      <path d="m0 737 1920 23.500" stroke="#7d7d7d" strokeWidth="1.6" />

      <path d="M299 294.500 1429 308.500V634L299 620z" fill="#ffc873" fillOpacity="0.22" stroke="#55524b" strokeWidth="1.3" />

      {/* ring around the core */}
      <path d="M393 414c40-10 110-15 186-17l-17 110h-53C470 490 440 450 425 423l-13-9z" fill="url(#bowl-left)" />
      <path d="M393 414c40-10 110-15 186-17l-2 11c-60 2-110 7-152 15l-13-9z" fill="url(#rim-left)" stroke="#2d2818" strokeWidth="1.3" />
      <path d="M405 414c40-9 100-14 173-15" fill="none" stroke="#3b341f" />
      <path d="M509 506c14-5 33-8 54-9l-2 10z" fill="#948863" stroke="#221d10" strokeWidth="1.2" />

      <path d="M1155 397c60 0 150 8 180 16 14 4 10 10 0 13h-24c-20 50-50 75-91 90h-52z" fill="url(#bowl-right)" />
      <path d="M1155 397c60 0 150 8 180 16 14 4 10 10 0 13h-15l-13-2c-40-9-90-15-150-16z" fill="url(#rim-right)" stroke="#2d2818" strokeWidth="1.3" />
      <path d="M1228 401c50 4 90 9 99 15 4 4 0 8-9 10" fill="none" stroke="#2d2818" strokeWidth="1.3" />
      <path d="M1335 426c8-2 10-5 9-9v183q-1 5-9 6z" fill="url(#wall)" stroke="#6b6248" strokeWidth="0.8" />
      <path d="M1168 498c25 1 42 4 57 11l-6 6h-49z" fill="#a1946f" stroke="#221d10" strokeWidth="1.2" />
      <path d="m1140 333 5-4 10 66 15 105 6 8-6 6-5-4z" fill="#a89d7a" stroke="#6b6248" strokeWidth="0.8" />
      <path d="m1154 395 16 104" stroke="#222" strokeDasharray="4 3" />
      <circle cx="1172" cy="509" r="4" fill="none" stroke="#221d10" />

      <path d="M589 325c50-9 150-13 291-13 120 0 210 6 255 13 14 3 11 5 5 8z" fill="#cec3a5" stroke="#2d2818" strokeWidth="1.4" />

      <path d={sectionOutline} fill="#fbcdf9" />
      <path d={sectionOutline} fill="url(#hatch)" stroke="#000" strokeWidth="2.2" strokeLinejoin="round" />

      {/* origin planes */}
      <path d="m833 458 27-7v132l-27 7z" fill="#ff9d4d" fillOpacity="0.5" />
      <path d="M882 451h129v132H882z" fill="#b0c8d0" fillOpacity="0.5" />
      <path d="m869 601 139 2-28 9-120-3z" fill="#f8c767" fillOpacity="0.65" />
      <path d="m870 601 140 2" stroke="#3d7a1f" strokeWidth="1.5" />
      <path d="M863.500 430v162" stroke="#1414ff" strokeWidth="2" strokeDasharray="20 3 8 3 26 3" />
      <path d="M743 606h4M753 606h3M784 608h6M822 609h4M900 609h8" stroke="#8d8468" strokeWidth="1.2" />
      <path d="m829 610 7-2" stroke="#111" strokeWidth="3" />
      <path d="m838 607 24-7" stroke="#f01818" strokeWidth="3" />
      <path d="m843 590 8 10 1 20-7-11z" fill="#1d83cd" />
      <path d="m843 590-1 18 11 17M852 600l2 12" fill="none" stroke="#166da8" strokeDasharray="2 2" />
      <circle cx="864" cy="600" r="7" fill="#f4f4f4" fillOpacity="0.8" stroke="#8b7d83" strokeWidth="2" />

      {/* rotation handle */}
      <path d="M839 700c3 28 11 53 24 55 14-2 22-30 24-65" fill="none" stroke="url(#arc-fade)" strokeWidth="1.8" />
      <ellipse cx="863.5" cy="755" rx="3" ry="16" fill="#e6e6e6" stroke="#222" strokeWidth="1.8" />
      <ellipse cx="863.5" cy="755" rx="0.8" ry="4" fill="#111" />
      <path d="M575 745h4M583 744.500h6M800 748h4M808 748h7M1240 753h12M1688 758h4M1696 758h5" stroke="#777" strokeWidth="1.5" />
    </svg>
  );
}

function DistanceInput() {
  const inputRef = useRef(null);

  useEffect(() => {
    inputRef.current?.focus();
    inputRef.current?.select();
  }, []);

  return (
    <div className="absolute left-[54.25%] top-[53.2%] flex h-[37px] items-center bg-[#f1f1f1] pl-[7px] pr-2">
      <span className="h-7 w-1 border-l-2 border-dotted border-[#bbb]" />
      <span className="mx-[5px] h-8 w-px bg-[#c0c0c0]" />
      <input
        ref={inputRef}
        aria-label="Distance value"
        defaultValue="0.00 mm"
        className="h-[30px] w-[104px] border-2 border-[#cfcfcf] bg-white text-center text-[16px] text-[#333] outline-none selection:bg-[#00b5bf] selection:text-white"
      />
      <button type="button" aria-label="More options" className="ml-[14px]">
        <svg viewBox="0 0 12 20" className="h-5 w-3" fill="#777"><circle cx="6" cy="2.500" r="2.200" /><circle cx="6" cy="10" r="2.200" /><circle cx="6" cy="17.500" r="2.200" /></svg>
      </button>
    </div>
  );
}

/* ---------- navigation bar ---------- */

const navItems = [
  {
    name: "Orbit",
    menu: true,
    draw: (
      <>
        <ellipse cx="11" cy="14" rx="10" ry="4" fill="none" stroke="#333" strokeWidth="1.3" />
        <path d="M8.500 24V6H6l5.500-6L17 6h-2.500v18z" fill="#e0dfe8" stroke="#555" />
        <path d="M3 16c5 3 12 3 17 0" fill="none" stroke="#333" strokeWidth="1.3" />
        <path d="m7 13-5 3 4 3z" fill="#333" />
      </>
    ),
  },
  {
    name: "Look At",
    draw: (
      <>
        <path d="m3 7 9-4-1 4zM13 7l4-4v4" fill="#ddd" stroke="#666" />
        <path d="M1.500 7.500h21v15h-21z" fill="#e4e4e4" stroke="#666" strokeWidth="1.5" />
        <path d="M5.500 11.500h13v7h-13z" fill="#aab3c2" stroke="#555" />
      </>
    ),
  },
  {
    name: "Pan",
    draw: (
      <path d="M7 23C5 19 1 16 0 12c1-2 3 0 5 2L3 5c0-2 2-2 3 0l2 6V3c0-2 2.500-2 3 0l1 8 1-9c1-2 3-1 3 1l-.5 8L18 5c1-2 3-1 2 1l-2 9c2-2 4-4 6-3-1 4-5 7-7 11z" fill="#fff" stroke="#555" strokeWidth="1.2" />
    ),
  },
  {
    name: "Zoom",
    draw: (
      <>
        <circle cx="9" cy="9" r="8" fill="#e8f0ee" stroke="#777" strokeWidth="1.3" />
        <path d="m15 15 8 8" stroke="#333" strokeWidth="4" />
        <path d="M18 4h5M20.500 1v6M18 9h5" stroke="#444" strokeWidth="1.2" />
      </>
    ),
  },
  {
    name: "Fit",
    menu: true,
    draw: (
      <>
        <path d="M1 1h22v22H1z" fill="none" stroke="#888" strokeDasharray="4 2" />
        <circle cx="9" cy="9" r="8" fill="#e8f0ee" stroke="#777" strokeWidth="1.3" />
        <path d="m15 15 8 8" stroke="#333" strokeWidth="4" />
      </>
    ),
  },
  {
    name: "Display Settings",
    menu: true,
    draw: (
      <>
        <path d="M1 1h22v17H1z" fill="#e5e5ea" stroke="#555" strokeWidth="1.3" />
        <path d="M3.500 3.500h17v12h-17z" fill="#88a8d6" stroke="#5c6c8e" />
        <path d="M9 18h6v3h4v2H5v-2h4z" fill="#666" />
      </>
    ),
  },
  {
    name: "Grid and Snaps",
    menu: true,
    draw: (
      <>
        <path d="M1 1h22v22H1z" fill="#fff" />
        <path d="M1.500 1.500h21v21h-21zM1 4.500h22M1 7.500h22M1 10.500h22M1 13.500h22M1 16.500h22M1 19.500h22M4.500 1v22M7.500 1v22M10.500 1v22M13.500 1v22M16.500 1v22M19.500 1v22" fill="none" stroke="#666" />
      </>
    ),
  },
  {
    name: "Viewports",
    menu: true,
    draw: (
      <>
        <path d="M1 2h22v20H1z" fill="#6e93c9" stroke="#445e8c" strokeWidth="1.5" />
        <path d="M3.500 4.500H11V11H3.500zM13 4.500h7.500V11H13zM3.500 13H11v6.500H3.500zM13 13h7.500v6.500H13z" fill="#a4bfe6" stroke="#445e8c" />
      </>
    ),
  },
];

function NavigationBar() {
  return (
    <div className="flex h-[35px] items-center gap-3 bg-[#f1f1f1] px-[6px]">
      {navItems.map((item) => (
        <button type="button" key={item.name} aria-label={item.name} className="flex items-center gap-1">
          <svg viewBox="0 0 24 24" className="h-6 w-6">{item.draw}</svg>
          {item.menu && <Caret />}
        </button>
      ))}
    </div>
  );
}

/* ---------- timeline ---------- */

const playbackPaths = [
  { name: "Go to start", d: "M0 2h3v20H0zM18 2v20L4 12z" },
  { name: "Step back", d: "M14 3v18L0 12zM16 8h3v8h-3z" },
  { name: "Play", d: "M2 0l18 12L2 24z" },
  { name: "Step forward", d: "M6 3v18l14-9zM1 8h3v8H1z" },
  { name: "Go to end", d: "M15 2h3v20h-3zM0 2v20l14-10z" },
];

const S = "timelineSketch";
const timeline = [
  S, "extrude", "plane", S, "plane", S, "loft", S, "plane", S, "loft", S, "extrude", S,
  "fillet", "fillet", "fillet", S, "extrude",
  "move", "move", "move", "move", "move", "move", "combine",
];
const markerAfter = 16;

function Timeline() {
  return (
    <footer className="flex h-[75px] items-start border-t-2 border-[#d6d6d6] bg-[#f1f1f1] pl-4 pr-5">
      <div className="flex w-[197px] flex-none gap-[18px] pt-[23px]">
        {playbackPaths.map((item) => (
          <button type="button" key={item.name} aria-label={item.name}>
            <svg viewBox="0 0 20 24" className="h-6 w-5" fill="#5c5c5c"><path d={item.d} /></svg>
          </button>
        ))}
      </div>
      <ol className="flex flex-1 pt-[22px]">
        {timeline.map((name, i) => (
          <li key={i} className="relative flex w-9 flex-none flex-col items-center">
            <button type="button" aria-label={`Feature ${i + 1}`} className={clsx(i > markerAfter && name !== "move" && "opacity-25", name === "move" && "opacity-50")}>
              <Drawing name={name} className="h-6 w-6" />
            </button>
            <span className="mt-1 h-2 w-[3px] bg-[#cbcbcb]" />
            <span
              className={clsx(
                "h-[3px] bg-[#cbcbcb]",
                i === 0 && "ml-auto w-[19px]",
                i === timeline.length - 1 && "mr-auto w-[19px]",
                i > 0 && i < timeline.length - 1 && "w-full"
              )}
            />
            {i === markerAfter && (
              <svg viewBox="0 0 18 48" className="absolute -right-[9px] -top-2 z-10 h-12 w-[18px]" fill="#666" aria-hidden="true">
                <path d="M0 0h18v6l-7 6v36H8V12L0 6z" />
              </svg>
            )}
          </li>
        ))}
      </ol>
      <button type="button" aria-label="Timeline settings" className="pt-[23px]">
        <svg viewBox="0 0 24 24" className="h-6 w-6"><path d={gearPath} fill="#666" fillRule="evenodd" /></svg>
      </button>
    </footer>
  );
}

export default function App() {
  return (
    <div className="flex min-h-screen flex-col bg-white font-['Liberation_Sans',Arial,sans-serif]">
      <TitleBar />
      <DocumentBar />
      <Ribbon />
      <main className="relative flex flex-1 flex-col overflow-hidden bg-white">
        <Scene />
        <div className="relative flex flex-1 flex-col justify-between gap-6 p-[6px]">
          <div className="flex items-start justify-between">
            <BrowserPanel />
            <div className="flex flex-col items-end pt-3">
              <div className="mr-[6px]"><ViewCube /></div>
              <div className="mt-3 flex items-start gap-[6px]">
                <SectionAnalysis />
                <div className="flex w-[33px] flex-col items-center bg-[#f2f2f2] pb-4 pt-3">
                  <button type="button" aria-label="Open quick setup"><DoubleArrow /></button>
                  <span className="mt-24 rotate-180 font-['Noto_Sans',sans-serif] text-[17px] leading-6 text-black [writing-mode:vertical-rl]">
                    QUICK SETUP
                  </span>
                </div>
              </div>
            </div>
          </div>
          <div className="grid h-10 grid-cols-[1fr_auto_1fr] items-start">
            <div className="flex h-[37px] w-[449px] items-center self-end border border-b-2 border-[#c8c8c8] bg-[#f1f1f1] pl-[37px] pr-4">
              <h2 className="flex-1 text-[16px] text-[#555]">COMMENTS</h2>
              <button type="button" aria-label="Expand comments"><RoundSign plus /></button>
            </div>
            <NavigationBar />
            <p className="self-center pr-5 pt-[3px] text-right text-[16px] font-bold text-[#222]">YZ Plane</p>
          </div>
        </div>
        <DistanceInput />
      </main>
      <Timeline />
    </div>
  );
}
